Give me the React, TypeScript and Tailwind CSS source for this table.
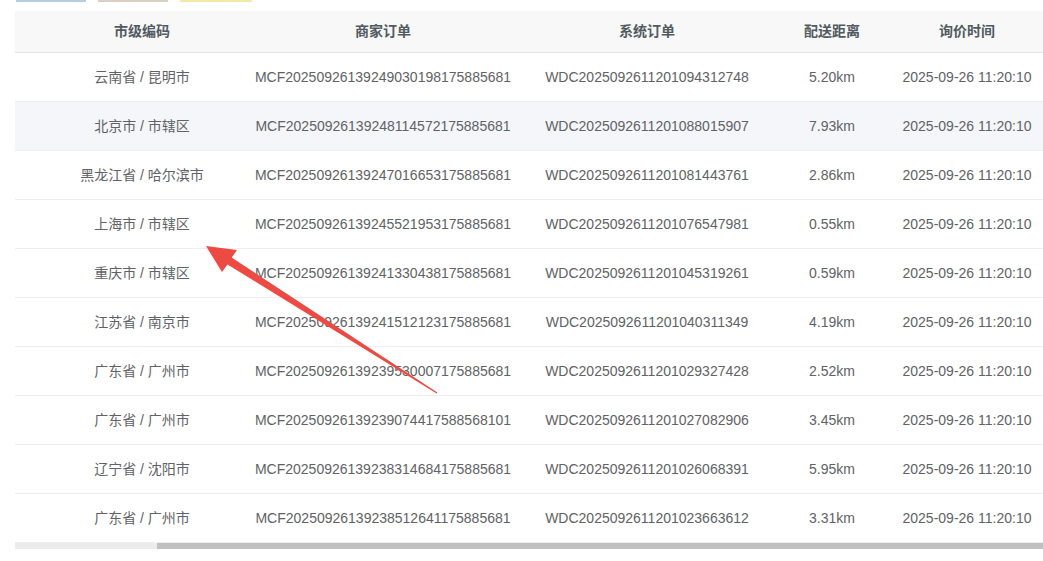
const rows = [
  { city: '云南省 / 昆明市', mcf: 'MCF20250926139249030198175885681', wdc: 'WDC2025092611201094312748', dist: '5.20km' },
  { city: '北京市 / 市辖区', mcf: 'MCF20250926139248114572175885681', wdc: 'WDC2025092611201088015907', dist: '7.93km' },
  { city: '黑龙江省 / 哈尔滨市', mcf: 'MCF20250926139247016653175885681', wdc: 'WDC2025092611201081443761', dist: '2.86km' },
  { city: '上海市 / 市辖区', mcf: 'MCF20250926139245521953175885681', wdc: 'WDC2025092611201076547981', dist: '0.55km' },
  { city: '重庆市 / 市辖区', mcf: 'MCF20250926139241330438175885681', wdc: 'WDC2025092611201045319261', dist: '0.59km' },
  { city: '江苏省 / 南京市', mcf: 'MCF20250926139241512123175885681', wdc: 'WDC2025092611201040311349', dist: '4.19km' },
  { city: '广东省 / 广州市', mcf: 'MCF20250926139239530007175885681', wdc: 'WDC2025092611201029327428', dist: '2.52km' },
  { city: '广东省 / 广州市', mcf: 'MCF20250926139239074417588568101', wdc: 'WDC2025092611201027082906', dist: '3.45km' },
  { city: '辽宁省 / 沈阳市', mcf: 'MCF20250926139238314684175885681', wdc: 'WDC2025092611201026068391', dist: '5.95km' },
  { city: '广东省 / 广州市', mcf: 'MCF20250926139238512641175885681', wdc: 'WDC2025092611201023663612', dist: '3.31km' },
];

const cols = 'grid grid-cols-[254px_228px_300px_70px_200px] w-[1052px]';

export default function App() {
  return (
    <div className="relative w-[1043px] h-[561px] overflow-hidden bg-white font-['Liberation_Sans','Noto_Sans_CJK_SC',sans-serif] text-[14px]">
      {/* cut-off buttons above the table */}
      <div className="flex gap-[12px] pl-[16px] h-[2px]">
        <div className="w-[70px] bg-[#b4cde0]" />
        <div className="w-[70px] bg-[#dccfc2]" />
        <div className="w-[72px] bg-[#f2eaa8]" />
      </div>

      <div className="ml-[15px] mt-[9px]">
        {/* header */}
        <div className={`${cols} h-[42px] bg-[#f8f8f8] border-b border-[#e4e4e4] text-[#515a60] font-bold`}>
          <div className="flex items-center justify-center">市级编码</div>
          <div className="flex items-center justify-center">商家订单</div>
          <div className="flex items-center justify-center">系统订单</div>
          <div className="flex items-center justify-center">配送距离</div>
          <div className="flex items-center justify-center">询价时间</div>
        </div>

        {rows.map((r, i) => (
          <div
            key={i}
            className={`${cols} h-[49px] border-b border-[#ebeef5] text-[#606266] ${i === 1 ? 'bg-[#f4f6fa]' : 'bg-white'}`}
          >
            <div className="flex items-center justify-center">{r.city}</div>
            <div className="flex items-center justify-center">{r.mcf}</div>
            <div className="flex items-center justify-center">{r.wdc}</div>
            <div className="flex items-center justify-center">{r.dist}</div>
            <div className="flex items-center justify-center">2025-09-26 11:20:10</div>
          </div>
        ))}

        {/* horizontal scrollbar */}
        <div className="flex h-[6px]">
          <div className="w-[142px] bg-[#ececec]" />
          <div className="flex-1 bg-[#c1c1c1]" />
        </div>
      </div>

      {/* annotation arrow */}
      <svg className="absolute left-0 top-0 pointer-events-none" width="1043" height="561">
        <polygon
          points="206,246 237,250 231.7,257.6 437.4,392.5 436.6,393.5 227.5,264.4 222,272"
          fill="#ec4a43"
        />
      </svg>
    </div>
  );
}
